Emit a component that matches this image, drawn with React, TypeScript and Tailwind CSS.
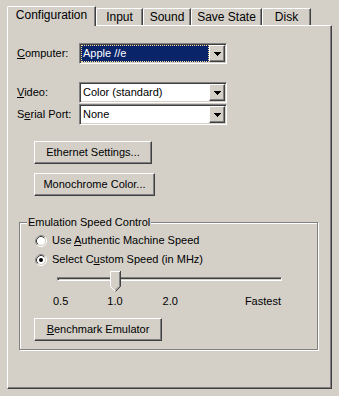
import React from "react";

// bordes clásicos de Windows
const raised =
  "border border-t-white border-l-white border-r-[#404040] border-b-[#404040] shadow-[inset_-1px_-1px_#808080]";
const sunken =
  "border border-t-[#808080] border-l-[#808080] border-r-white border-b-white shadow-[inset_1px_1px_#404040,inset_-1px_-1px_#d4d0c8]";

const tabs = [
    { name: "Configuration", w: "w-[89px]" },
    { name: "Input", w: "w-[47px]" },
    { name: "Sound", w: "w-[48px]" },
    { name: "Save State", w: "w-[71px]" },
    { name: "Disk", w: "w-[49px]" },
];

const Arrow = () => (
    <svg width="7" height="4" viewBox="0 0 7 4">
        <path d="M0 0H7V1H6V2H5V3H4V4H3V3H2V2H1V1H0Z" fill="black" />
    </svg>
);

const Radio = ({ checked }: { checked?: boolean }) => (
    <svg width="12" height="12" viewBox="0 0 12 12">
        <circle cx="6" cy="6" r="5.5" fill="none" stroke="white" />
        <path d="M2.11 9.89 A5.5 5.5 0 0 1 9.89 2.11" fill="none" stroke="#808080" />
        <circle cx="6" cy="6" r="4.5" fill="white" stroke="#d4d0c8" />
        <path d="M2.82 9.18 A4.5 4.5 0 0 1 9.18 2.82" fill="none" stroke="#404040" />
        {checked && <circle cx="6" cy="6" r="2" fill="black" />}
    </svg>
);

const Thumb = () => (
    <svg width="11" height="21" viewBox="0 0 11 21">
        <polygon points="0,0 11,0 11,15 5.5,20.5 0,15" fill="#d4d0c8" />
        <polyline points="5,20 0.5,15.5 0.5,0.5 10,0.5" fill="none" stroke="white" />
        <polyline points="10.5,0 10.5,15.5 5.5,20.5" fill="none" stroke="#404040" />
        <polyline points="9.5,1 9.5,15 5.5,19" fill="none" stroke="#808080" />
    </svg>
);

interface ComboProps {
    label: React.ReactNode;
    value: string;
    selected?: boolean;
    mt: string;
}

const Combo: React.FC<ComboProps> = ({ label, value, selected, mt }) => (
    <div className={`flex items-center ${mt}`}>
        <span className="pl-[9px] w-[71px]">{label}</span>
        <div className={`${sunken} bg-white w-[148px] h-[21px] p-[1px] flex`}>
            {selected ? (
                <div className="flex-1 flex items-center bg-[#0a246a] text-white border border-dotted border-[#f5db95] pl-[1px]">
                    {value}
                </div>
            ) : (
                <div className="flex-1 flex items-center pl-[2px]">{value}</div>
            )}
            <div className={`${raised} bg-[#d4d0c8] w-[16px] h-[17px] flex items-center justify-center`}>
                <Arrow />
            </div>
        </div>
    </div>
);

const Button = ({ children, cls }: { children: React.ReactNode; cls: string }) => (
    <div className={`${raised} bg-[#d4d0c8] h-[23px] flex items-center justify-center ${cls}`}>
        {children}
    </div>
);

export default function App() {
    return (
        <div className="w-[339px] h-[396px] bg-[#d4d0c8] pt-[6px] px-[7px] text-[11px] leading-[13px] text-black font-['Liberation_Sans',Arial,sans-serif]">
            {/* Pestañas */}
            <div className="flex items-end h-[19px] text-[12px] leading-[14px]">
                {tabs.map((t, i) =>
                    i === 0 ? (
                        <div
                            key={t.name}
                            className={`${t.w} h-[20px] -mb-px relative z-10 bg-[#d4d0c8] border-l border-t border-white border-r border-r-[#404040] shadow-[inset_-1px_0_#808080] rounded-tl-[2px] flex justify-center pt-[1px]`}
                        >
                            {t.name}
                        </div>
                    ) : (
                        <div
                            key={t.name}
                            className={`${t.w} h-[17px] border-l border-t border-white border-r border-r-[#404040] shadow-[inset_-1px_0_#808080] rounded-tl-[2px] flex justify-center pt-[1px]`}
                        >
                            {t.name}
                        </div>
                    )
                )}
            </div>

            {/* Panel */}
            <div className="w-[325px] h-[364px] border-l border-t border-white border-r border-b border-r-[#404040] border-b-[#404040] shadow-[inset_-1px_-1px_#808080]">
                <Combo mt="mt-[17px]" selected value="Apple //e" label={<><span className="underline">C</span>omputer:</>} />
                <Combo mt="mt-[18px]" value="Color (standard)" label={<><span className="underline">V</span>ideo:</>} />
                <Combo mt="mt-[1px]" value="None" label={<>S<span className="underline">e</span>rial Port:</>} />

                <Button cls="w-[118px] ml-[26px] mt-[16px]">Ethernet Settings...</Button>
                <Button cls="w-[121px] ml-[26px] mt-[9px]">Monochrome Color...</Button>

                {/* Grupo velocidad */}
                <div className="ml-[11px] mt-[26px] w-[299px] h-[128px] border border-[#808080] shadow-[inset_1px_1px_white,1px_1px_white]">
                    <div className="w-fit ml-[7px] px-[1px] -mt-[7px] bg-[#d4d0c8]">Emulation Speed Control</div>

                    <div className="flex items-center gap-[5px] ml-[15px] mt-[5px] h-[13px]">
                        <Radio />
                        <span>Use <span className="underline">A</span>uthentic Machine Speed</span>
                    </div>
                    <div className="flex items-center gap-[5px] ml-[15px] mt-[6px] h-[13px]">
                        <Radio checked />
                        <span>Select C<span className="underline">u</span>stom Speed (in MHz)</span>
                    </div>

                    <div className="relative ml-[37px] mt-[5px] w-[225px] h-[21px]">
                        <div className={`absolute left-0 right-0 top-[6px] h-[4px] ${sunken}`} />
                        <div className="absolute left-[53px] top-0">
                            <Thumb />
                        </div>
                    </div>

                    <div className="flex mt-[3px] pl-[33px]">
                        <span>0.5</span>
                        <span className="ml-[39px]">1.0</span>
                        <span className="ml-[40px]">2.0</span>
                        <span className="ml-[67px]">Fastest</span>
                    </div>

                    <Button cls="w-[128px] ml-[14px] mt-[10px]">
                        <span><span className="underline">B</span>enchmark Emulator</span>
                    </Button>
                </div>
            </div>
        </div>
    );
}
